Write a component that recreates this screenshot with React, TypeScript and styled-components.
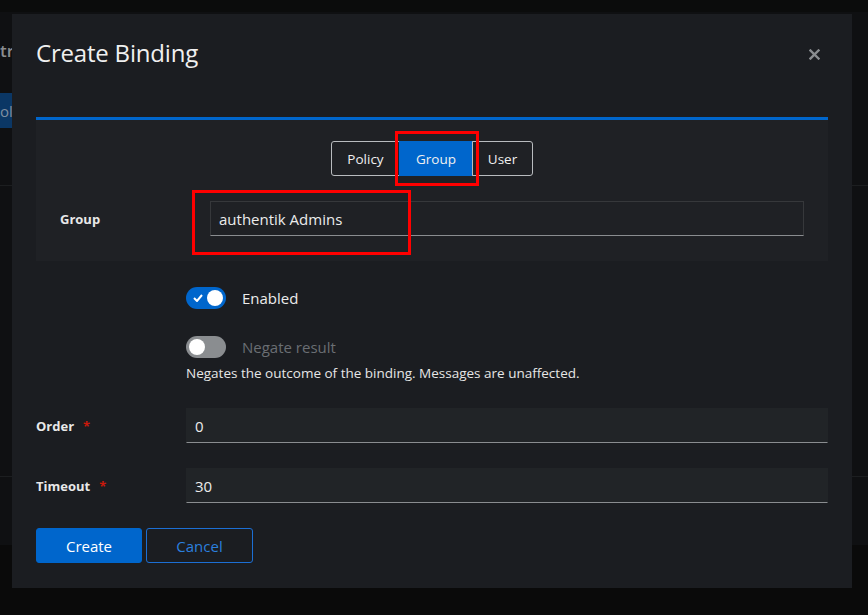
import React from "react";
import styled, { createGlobalStyle } from "styled-components";

const Global = createGlobalStyle`
  html, body { margin: 0; padding: 0; background: #0b0c0c; }
  body { font-family: "Open Sans", "Liberation Sans", sans-serif; color: #e0e0e0; }
  * { box-sizing: border-box; }
`;

const Page = styled.div`
  position: relative;
  width: 868px;
  height: 615px;
  overflow: hidden;
  display: flex;
  flex-direction: column;
  background: #0b0c0c;
`;

const TopStrip = styled.div`
  height: 12px;
  background: #0b0c0c;
`;

const PageMain = styled.div`
  flex: 0 0 533px;
  background: #0f1012;
  display: flex;
  flex-direction: column;
`;

const PageHeading = styled.div`
  margin-top: 27px;
  width: 12px;
  overflow: hidden;
  font-size: 17px;
  font-weight: 600;
  color: #8a8c8f;
  white-space: nowrap;
  line-height: 24px;
`;

const PageTab = styled.div`
  margin-top: 30px;
  width: 12px;
  height: 35px;
  overflow: hidden;
  display: flex;
  align-items: center;
  background: #0b3765;
  color: #7f8ea0;
  font-size: 15px;
  white-space: nowrap;
`;

const PageRule = styled.div<{ $top: number }>`
  margin-top: ${(p) => p.$top}px;
  border-top: 1px solid #1c1e20;
`;

const PageBottom = styled.div`
  flex: 1;
  background: #0a0a0a;
`;

const Modal = styled.div`
  position: absolute;
  left: 12px;
  top: 14px;
  width: 840px;
  height: 574px;
  background: #1b1d21;
  padding: 24px;
  display: flex;
  flex-direction: column;
`;

const Header = styled.div`
  display: flex;
  align-items: center;
  justify-content: space-between;
  height: 30px;
`;

const Title = styled.h1`
  margin: 0;
  font-size: 24px;
  font-weight: 500;
  line-height: 30px;
  color: #f0f0f0;
  letter-spacing: -0.2px;
`;

const Close = styled.button`
  border: 0;
  background: transparent;
  padding: 0;
  margin-right: 8px;
  margin-top: 2px;
  width: 12px;
  height: 12px;
  display: flex;
  align-items: center;
  justify-content: center;
  color: #8a8d90;
`;

const Panel = styled.div`
  margin-top: 49px;
  border-top: 3px solid #0066cc;
  background: #1f2125;
  padding: 21px 24px 25px;
  display: flex;
  flex-direction: column;
  gap: 25px;
`;

const ToggleGroup = styled.div`
  display: flex;
  justify-content: center;
`;

const ToggleItem = styled.button<{ $active?: boolean; $first?: boolean; $last?: boolean; $w: number }>`
  height: 35px;
  width: ${(p) => p.$w}px;
  padding: 0;
  font-family: inherit;
  font-size: 13.5px;
  color: #f0f0f0;
  background: ${(p) => (p.$active ? "#0066cc" : "transparent")};
  border: 1px solid #b9bcbf;
  margin-left: ${(p) => (p.$first ? "0" : "-1px")};
  border-radius: ${(p) => (p.$first ? "3px 0 0 3px" : p.$last ? "0 3px 3px 0" : "0")};
  ${(p) => (p.$active ? "border-left-color:#0066cc; border-top-color:#0066cc; border-bottom-color:#0066cc;" : "")}
`;

const Row = styled.div`
  display: grid;
  grid-template-columns: 150px 1fr;
  align-items: center;
`;

const Label = styled.label`
  font-size: 13px;
  font-weight: 700;
  color: #e8e8e8;
  display: flex;
  align-items: center;
  gap: 9px;
`;

const Req = styled.span`
  color: #c9190b;
  font-size: 13px;
`;

const Input = styled.div<{ $filled?: boolean }>`
  height: 35px;
  display: flex;
  align-items: center;
  padding: 0 8px;
  font-size: 15px;
  color: #ececec;
  background: ${(p) => (p.$filled ? "#212427" : "transparent")};
  border: 1px solid ${(p) => (p.$filled ? "#212427" : "#36383b")};
  border-bottom-color: #8a8d90;
`;

const Body = styled.div`
  margin-top: 25px;
  display: flex;
  flex-direction: column;
  gap: 25px;
`;

const SwitchLine = styled.div`
  display: flex;
  align-items: center;
  gap: 16px;
  height: 24px;
`;

const Track = styled.span<{ $on?: boolean }>`
  position: relative;
  width: 40px;
  height: 22px;
  border-radius: 11px;
  background: ${(p) => (p.$on ? "#0066cc" : "#8a8d90")};
  display: inline-flex;
  align-items: center;
  justify-content: ${(p) => (p.$on ? "flex-end" : "flex-start")};
  padding: 0 3px;
`;

const Knob = styled.span`
  width: 16px;
  height: 16px;
  border-radius: 50%;
  background: #ffffff;
`;

const CheckMark = styled.svg`
  position: absolute;
  left: 7px;
  top: 7px;
`;

const SwitchText = styled.span<{ $muted?: boolean }>`
  font-size: 15px;
  color: ${(p) => (p.$muted ? "#6a6e73" : "#ececec")};
`;

const Stack = styled.div`
  display: flex;
  flex-direction: column;
  gap: 4px;
`;

const Helper = styled.div`
  font-size: 13.5px;
  line-height: 20px;
  color: #e6e6e6;
`;

const Actions = styled.div`
  display: flex;
  gap: 4px;
`;

const Btn = styled.button<{ $primary?: boolean }>`
  height: 35px;
  width: ${(p) => (p.$primary ? "106px" : "107px")};
  font-family: inherit;
  font-size: 15px;
  border-radius: 3px;
  background: ${(p) => (p.$primary ? "#0066cc" : "transparent")};
  color: ${(p) => (p.$primary ? "#ffffff" : "#2b7fde")};
  border: 1px solid ${(p) => (p.$primary ? "#0066cc" : "#1c6fd4")};
`;

const Marker = styled.div<{ $l: number; $t: number; $w: number; $h: number }>`
  position: absolute;
  left: ${(p) => p.$l}px;
  top: ${(p) => p.$t}px;
  width: ${(p) => p.$w}px;
  height: ${(p) => p.$h}px;
  border: 3px solid #ff0000;
  pointer-events: none;
`;

export default function App() {
  return (
    <Page>
      <Global />
      <TopStrip />
      <PageMain>
        <PageHeading>tro</PageHeading>
        <PageTab>olic</PageTab>
        <PageRule $top={57} />
        <PageRule $top={290} />
      </PageMain>
      <PageBottom />

      <Modal>
        <Header>
          <Title>Create Binding</Title>
          <Close aria-label="Close">
            <svg width="11" height="11" viewBox="0 0 11 11">
              <path d="M1.5 1.5 L9.5 9.5 M9.5 1.5 L1.5 9.5" stroke="currentColor" strokeWidth="2.4" strokeLinecap="square" />
            </svg>
          </Close>
        </Header>

        <Panel>
          <ToggleGroup>
            <ToggleItem $first $w={69}>Policy</ToggleItem>
            <ToggleItem $active $w={74}>Group</ToggleItem>
            <ToggleItem $last $w={61}>User</ToggleItem>
          </ToggleGroup>
          <Row>
            <Label>Group</Label>
            <Input>authentik Admins</Input>
          </Row>
        </Panel>

        <Body>
          <Row>
            <span />
            <SwitchLine>
              <Track $on>
                <CheckMark width="10" height="8" viewBox="0 0 10 8">
                  <path d="M1 4 L4 7 L9 1" stroke="#fff" strokeWidth="2" fill="none" />
                </CheckMark>
                <Knob />
              </Track>
              <SwitchText>Enabled</SwitchText>
            </SwitchLine>
          </Row>
          <Row>
            <span />
            <Stack>
              <SwitchLine>
                <Track>
                  <Knob />
                </Track>
                <SwitchText $muted>Negate result</SwitchText>
              </SwitchLine>
              <Helper>Negates the outcome of the binding. Messages are unaffected.</Helper>
            </Stack>
          </Row>
          <Row>
            <Label>
              Order <Req>*</Req>
            </Label>
            <Input $filled>0</Input>
          </Row>
          <Row>
            <Label>
              Timeout <Req>*</Req>
            </Label>
            <Input $filled>30</Input>
          </Row>
          <Actions>
            <Btn $primary>Create</Btn>
            <Btn>Cancel</Btn>
          </Actions>
        </Body>
      </Modal>

      <Marker $l={395} $t={131} $w={84} $h={55} />
      <Marker $l={192} $t={190} $w={219} $h={65} />
    </Page>
  );
}
